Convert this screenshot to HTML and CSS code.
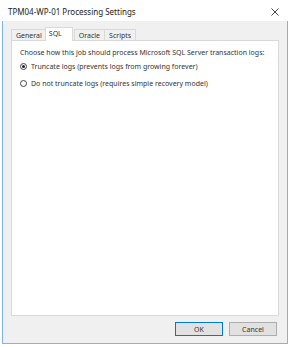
FILE: index.html
```html
<!DOCTYPE html>
<html>
<head>
<meta charset="utf-8">
<link rel="stylesheet" href="styles.css">
</head>
<body>
<div class="window">
  <div class="titlebar">
    <span class="title">TPM04-WP-01 Processing Settings</span>
    <svg class="close" width="8" height="8" viewBox="0 0 8 8"><path d="M0.5 0.5L7.5 7.5M7.5 0.5L0.5 7.5" stroke="#333" stroke-width="0.9"/></svg>
  </div>
  <div class="client">
    <div class="tabs">
      <div class="tab">General</div>
      <div class="tab active">SQL</div>
      <div class="tab">Oracle</div>
      <div class="tab">Scripts</div>
    </div>
    <div class="panel">
      <div class="heading">Choose how this job should process Microsoft SQL Server transaction logs:</div>
      <div class="option"><span class="radio checked"></span><span>Truncate logs (prevents logs from growing forever)</span></div>
      <div class="option"><span class="radio"></span><span>Do not truncate logs (requires simple recovery model)</span></div>
    </div>
    <div class="footer">
      <div class="btn default">OK</div>
      <div class="btn">Cancel</div>
    </div>
  </div>
</div>
</body>
</html>
```
FILE: styles.css
```css
html, body { margin: 0; padding: 0; background: #ffffff; }
body { font-family: "Noto Sans", "Open Sans", sans-serif; font-size: 7px; color: #333; }
.window {
  margin-left: 2px;
  width: 284px;
  height: 343px;
  border-left: 1px solid #7eb4ea;
  border-right: 1px solid #7eb4ea;
  border-bottom: 1px solid #7eb4ea;
  display: flex;
  flex-direction: column;
  background: #f0f0f0;
}
.titlebar {
  height: 21px;
  margin: 0 -1px;
  padding: 2px 7px 0 6px;
  box-sizing: border-box;
  background: #ffffff;
  display: flex;
  align-items: center;
  justify-content: space-between;
  flex: none;
}
.title { font-size: 8px; color: #222; }
.close { margin-right: 2px; }
.client { flex: 1; display: flex; flex-direction: column; padding: 7px 8px 0 8px; }
.tabs { display: flex; align-items: flex-end; height: 12px; }
.tab {
  height: 11px;
  line-height: 11px;
  padding: 0 4px;
  border: 1px solid #d9d9d9;
  border-bottom: none;
  margin-right: -1px;
  background: #f0f0f0;
  box-sizing: border-box;
  position: relative;
  white-space: nowrap;
}
.tab.active {
  background: #ffffff;
  padding: 0 10px 0 3px;
  margin: 0 1px -1px -1px;
  z-index: 1;
  height: 14px;
  line-height: 12px;
}
.panel {
  height: 276px;
  box-sizing: border-box;
  background: #ffffff;
  border: 1px solid #d9d9d9;
  padding: 7px 8px 0 8px;
}
.heading { line-height: 10px; white-space: nowrap; }
.option { display: flex; align-items: center; height: 17px; white-space: nowrap; }
.radio {
  width: 7px; height: 7px;
  border: 1px solid #444;
  border-radius: 50%;
  box-sizing: border-box;
  margin-right: 4px;
  display: flex; align-items: center; justify-content: center;
  background: #fff;
  flex: none;
}
.radio.checked::after { content: ""; width: 3px; height: 3px; border-radius: 50%; background: #222; }
.footer { display: flex; justify-content: flex-end; gap: 6px; padding: 6px 2px 0 0; }
.btn {
  width: 48px; height: 14px; box-sizing: border-box;
  background: #e1e1e1; border: 1px solid #adadad;
  display: flex; align-items: center; justify-content: center;
  font-size: 7px;
}
.btn.default { border-color: #0078d7; }
```
